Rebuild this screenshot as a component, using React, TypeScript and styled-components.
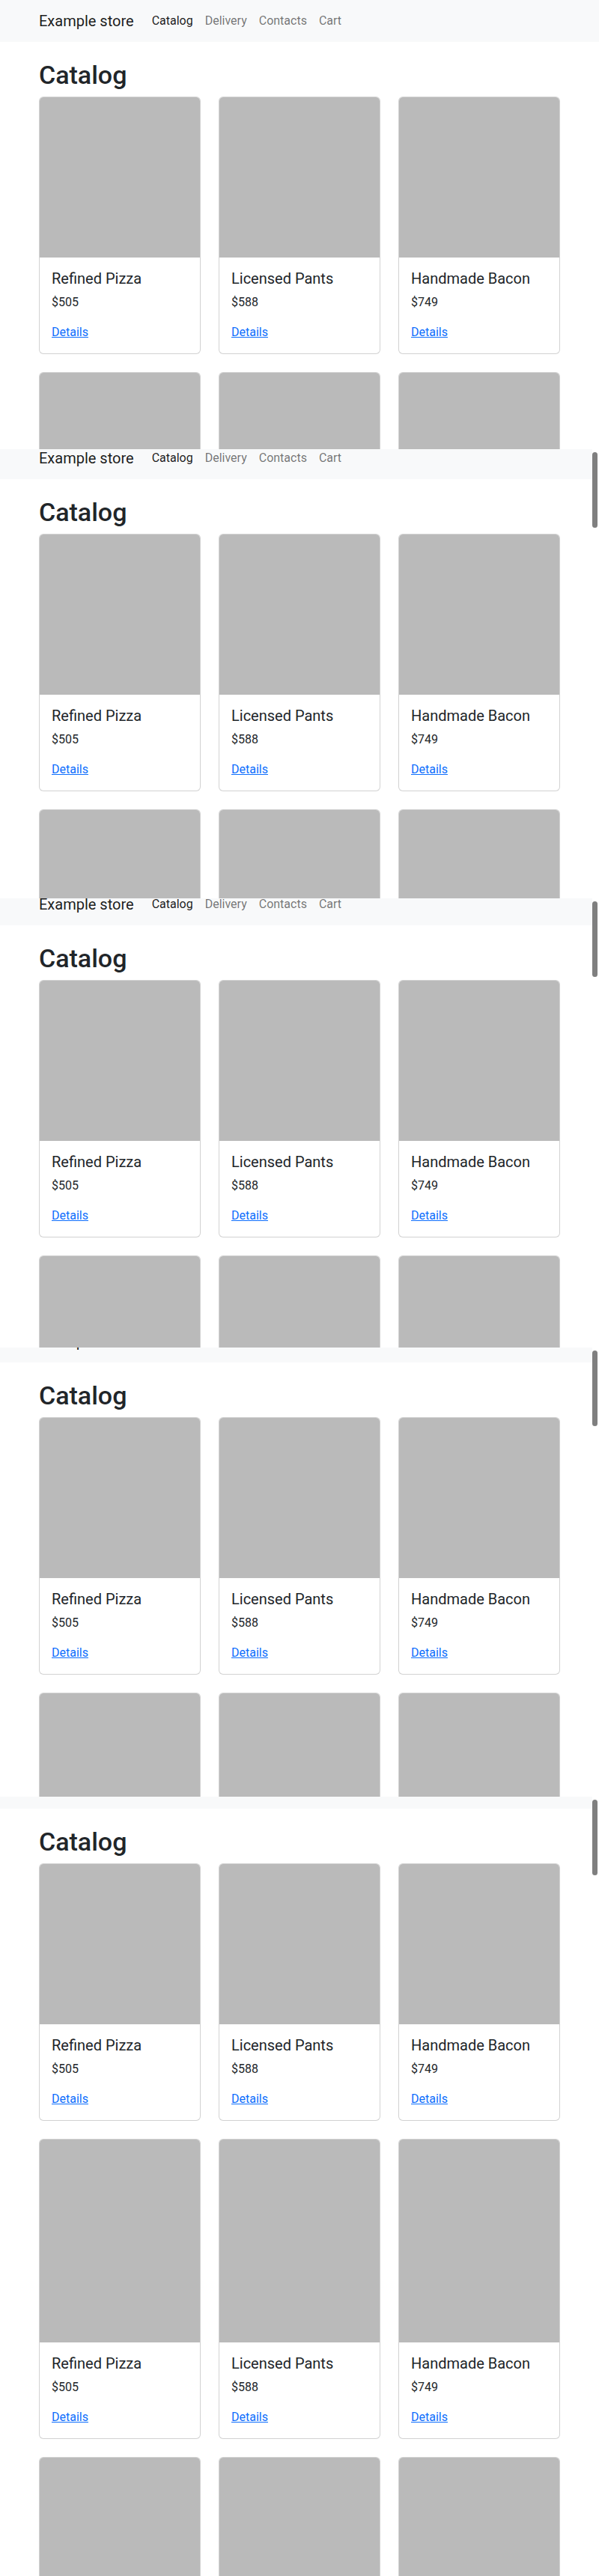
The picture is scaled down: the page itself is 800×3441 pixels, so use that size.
import styled, { createGlobalStyle } from 'styled-components';

interface Product {
    id: number;
    title: string;
    price: number;
}

interface Shot {
    height: number;
    offset: number;
    rows: number[];
    scrollbar: boolean;
}

const products: Product[] = [
    { id: 1, title: 'Refined Pizza', price: 505 },
    { id: 2, title: 'Licensed Pants', price: 588 },
    { id: 3, title: 'Handmade Bacon', price: 749 },
];

// each shot is one captured viewport of the same page, a little scrolled
const shots: Shot[] = [
    { height: 600, offset: 0, rows: [214, 214], scrollbar: false },
    { height: 600, offset: 16, rows: [214, 214], scrollbar: true },
    { height: 600, offset: 20, rows: [214, 214], scrollbar: true },
    { height: 600, offset: 36, rows: [214, 214], scrollbar: true },
    { height: 1041, offset: 40, rows: [214, 271, 214], scrollbar: true },
];

const navLinks = ['Catalog', 'Delivery', 'Contacts', 'Cart'];

const GlobalStyle = createGlobalStyle`
    * {
        box-sizing: border-box;
    }

    body {
        margin: 0;
        background: #ffffff;
        color: #212529;
        font-family: Roboto, 'Noto Sans', 'Liberation Sans', sans-serif;
        font-size: 16px;
        line-height: 1.5;
    }
`;

function ProductCard({ item, imageHeight }: { item: Product; imageHeight: number }) {
    return (
        <CardStyled>
            <CardImage $height={imageHeight} />
            <CardBody>
                <CardTitle>{item.title}</CardTitle>
                <CardPrice>${item.price}</CardPrice>
                <DetailsLink href="#">Details</DetailsLink>
            </CardBody>
        </CardStyled>
    );
}

function Page({ rows }: { rows: number[] }) {
    return (
        <>
            <Navbar>
                <NavContainer>
                    <Brand>Example store</Brand>
                    <NavList>
                        {navLinks.map((label, i) => (
                            <NavLink key={label} $active={i === 0}>
                                {label}
                            </NavLink>
                        ))}
                    </NavList>
                </NavContainer>
            </Navbar>
            <Container>
                <PageTitle>Catalog</PageTitle>
                <CardGrid>
                    {rows.map((imageHeight, r) =>
                        products.map((item) => (
                            <ProductCard
                                key={`${r}-${item.id}`}
                                item={item}
                                imageHeight={imageHeight}
                            />
                        ))
                    )}
                </CardGrid>
            </Container>
        </>
    );
}

export default function App() {
    return (
        <>
            <GlobalStyle />
            <Stack>
                {shots.map((shot, i) => (
                    <Frame key={i} $height={shot.height}>
                        <Scrolled $offset={shot.offset}>
                            <Page rows={shot.rows} />
                        </Scrolled>
                        {shot.scrollbar && (
                            <ScrollTrack>
                                <ScrollThumb />
                            </ScrollTrack>
                        )}
                    </Frame>
                ))}
            </Stack>
        </>
    );
}

const Stack = styled.div`
    display: flex;
    flex-direction: column;
    width: 800px;
`;

const Frame = styled.div<{ $height: number }>`
    position: relative;
    height: ${(p) => p.$height}px;
    overflow: hidden;
    background: #ffffff;
`;

const Scrolled = styled.div<{ $offset: number }>`
    margin-top: -${(p) => p.$offset}px;
`;

const ScrollTrack = styled.div`
    position: absolute;
    top: 0;
    right: 0;
    bottom: 0;
    width: 9px;
    background: #ffffff;
`;

const ScrollThumb = styled.div`
    margin-top: 4px;
    width: 7px;
    height: 101px;
    border-radius: 4px;
    background: #7f7f7f;
`;

const Navbar = styled.nav`
    height: 56px;
    padding: 8px 0;
    background: #f8f9fa;
`;

const Container = styled.div`
    max-width: 720px;
    margin: 0 auto;
    padding: 0 12px;
    display: flex;
    flex-direction: column;
`;

const NavContainer = styled(Container)`
    flex-direction: row;
    align-items: center;
`;

const Brand = styled.a`
    padding: 5px 0;
    margin-right: 16px;
    font-size: 20px;
    line-height: 30px;
    color: rgba(0, 0, 0, 0.9);
    white-space: nowrap;
`;

const NavList = styled.div`
    display: flex;
`;

const NavLink = styled.a<{ $active: boolean }>`
    padding: 8px;
    font-size: 16px;
    line-height: 24px;
    color: ${(p) => (p.$active ? 'rgba(0, 0, 0, 0.9)' : 'rgba(0, 0, 0, 0.55)')};
`;

const PageTitle = styled.h1`
    margin: 24px 0 8px;
    font-size: 34px;
    font-weight: 500;
    line-height: 1.2;
`;

const CardGrid = styled.div`
    display: grid;
    grid-template-columns: repeat(3, 1fr);
    gap: 24px;
`;

const CardStyled = styled.div`
    display: flex;
    flex-direction: column;
    border: 1px solid rgba(0, 0, 0, 0.175);
    border-radius: 6px;
    overflow: hidden;
    background: #ffffff;
`;

const CardImage = styled.div<{ $height: number }>`
    height: ${(p) => p.$height}px;
    background: #bababa;
`;

const CardBody = styled.div`
    display: flex;
    flex-direction: column;
    align-items: flex-start;
    padding: 16px;
`;

const CardTitle = styled.h5`
    margin: 0 0 8px;
    font-size: 20px;
    font-weight: 400;
    line-height: 1.2;
`;

const CardPrice = styled.p`
    margin: 0 0 16px;
`;

const DetailsLink = styled.a`
    color: #0d6efd;
    text-decoration: underline;
`;
